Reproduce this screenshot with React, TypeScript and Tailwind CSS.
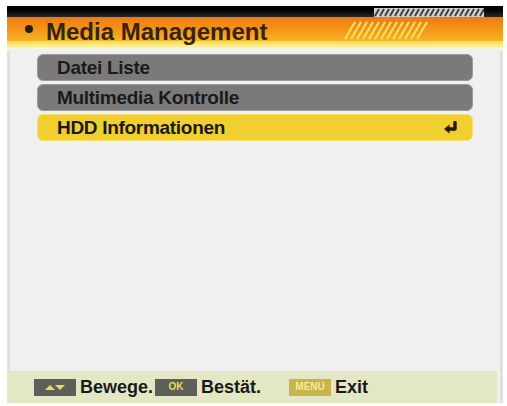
import React from "react";

function EnterIcon() {
  return (
    <svg width="16" height="13" viewBox="0 0 16 13" className="mr-[13px]">
      <path d="M12 1.5 V8 H6" stroke="#24160a" strokeWidth="3.4" fill="none" strokeLinecap="round" strokeLinejoin="round" />
      <path d="M1 8 L6.5 3.5 V12.5 Z" fill="#24160a" />
    </svg>
  );
}

function MenuRow({ label, active }: { label: string; active?: boolean }) {
  return (
    <div
      className={
        active
          ? "flex h-[27px] items-center justify-between rounded-[6px] border border-[#f6e070] bg-[#f1cf2e] pl-[19px]"
          : "flex h-[27px] items-center justify-between rounded-[6px] border border-[#9c9c9c] bg-[#7a7a7a] pl-[19px]"
      }
    >
      <span className="text-[19px] font-bold leading-none tracking-[-0.3px] text-[#1a1a1a]">{label}</span>
      {active && <EnterIcon />}
    </div>
  );
}

function KeyBox({ children, yellow }: { children: React.ReactNode; yellow?: boolean }) {
  return (
    <div
      className={
        yellow
          ? "flex h-[17px] w-[42px] items-center justify-center bg-[#c8b44c] text-[10px] font-bold leading-none text-[#f4ea9a]"
          : "flex h-[17px] w-[42px] items-center justify-center bg-[#5c5f5a] text-[10px] font-bold leading-none text-[#e8dc50]"
      }
    >
      {children}
    </div>
  );
}

export default function App() {
  return (
    <div className="h-[406px] w-[507px] bg-white pb-[3px] pl-[7px] pr-[4px] pt-[6px]" style={{ fontFamily: '"Liberation Sans", Arial, sans-serif' }}>
      <div className="flex h-full flex-col border-l-[3px] border-r-[3px] border-[#e0e0e0] bg-[#f0f0f0]">
        <div className="relative -mx-[3px]">
          <div className="h-[11px] bg-gradient-to-b from-[#000000] to-[#2a2a2a]" />
          <div className="flex h-[24px] items-center bg-gradient-to-b from-[#ee7a10] via-[#f39418] to-[#f6b424] pl-[18px]">
            <span className="h-[8px] w-[8px] rounded-full bg-[#2a1a08]" />
            <span className="ml-[13px] mt-[5px] text-[24px] font-bold leading-none text-[#36240e]">Media Management</span>
          </div>
          <div className="h-[7px] bg-gradient-to-b from-[#f8dc3a] to-[#fbf3b0]" />
          <div className="h-[3px] bg-gradient-to-b from-[#f8f4dc] to-[#f0f0f0]" />
          <svg className="absolute left-[330px] top-[2px]" width="173" height="32" viewBox="0 0 173 32">
            <rect x="37" y="0" width="110" height="9" fill="#cfcfcf" />
            {Array.from({ length: 22 }).map((_, i) => (
              <line key={i} x1={38 + i * 5} y1="8" x2={42 + i * 5} y2="1" stroke="#3a3a3a" strokeWidth="1.8" />
            ))}
            {Array.from({ length: 13 }).map((_, i) => (
              <line key={"y" + i} x1={8 + i * 6} y1="31" x2={18 + i * 6} y2="14" stroke="#f8e268" strokeWidth="2" />
            ))}
          </svg>
        </div>
        <div className="flex flex-1 flex-col gap-[3px] px-[27px] pt-[3px]">
          <MenuRow label="Datei Liste" />
          <MenuRow label="Multimedia Kontrolle" />
          <MenuRow label="HDD Informationen" active />
        </div>
        <div className="-ml-[3px] mr-[3px] flex h-[32px] items-center bg-[#e3e7c3] pl-[27px] text-[18px] font-bold leading-none text-[#1a1a1a]">
          <KeyBox>
            <svg width="22" height="7" viewBox="0 0 22 7">
              <path d="M1 6 L6 1 L11 6 Z" fill="#e8dc50" />
              <path d="M11 1 L21 1 L16 6 Z" fill="#e8dc50" />
            </svg>
          </KeyBox>
          <span className="ml-[4px]">Bewege.</span>
          <div className="ml-[2px]">
            <KeyBox>OK</KeyBox>
          </div>
          <span className="ml-[4px]">Bestät.</span>
          <div className="ml-[28px]">
            <KeyBox yellow>MENU</KeyBox>
          </div>
          <span className="ml-[4px]">Exit</span>
        </div>
      </div>
    </div>
  );
}
